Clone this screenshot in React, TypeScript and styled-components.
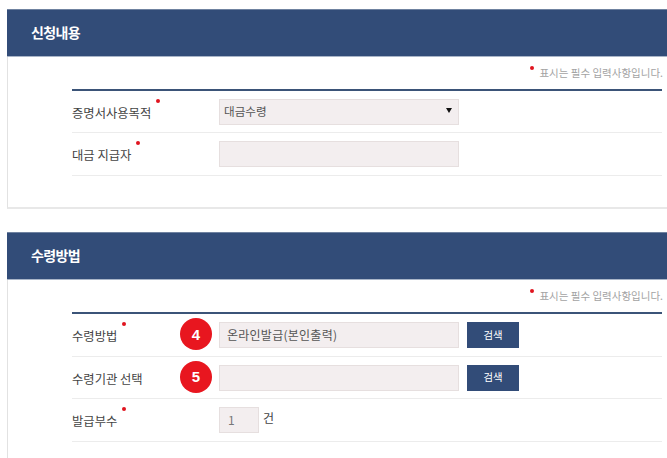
import styled, { createGlobalStyle } from "styled-components";

const GlobalStyle = createGlobalStyle`
  html, body {
    margin: 0;
    padding: 0;
    background: #fff;
    overflow: hidden;
  }
  body {
    font-family: "Noto Sans CJK KR", "Noto Sans", sans-serif;
  }
`;

const Page = styled.div`
  width: 667px;
  height: 458px;
  overflow: hidden;
  padding: 9px 0 0 7px;
  box-sizing: border-box;
  display: flex;
  flex-direction: column;
  gap: 23px;
`;

const Panel = styled.section<{ $height: number }>`
  width: 680px;
  height: ${(p) => p.$height}px;
  flex: none;
  box-sizing: border-box;
  border-left: 1px solid #e2e2e2;
  border-bottom: 2px solid #e8e8e8;
`;

const PanelHeader = styled.h2`
  margin: 0 0 0 -1px;
  height: 48px;
  box-sizing: border-box;
  padding: 0 0 3px 24px;
  display: flex;
  align-items: center;
  background: #324c78;
  border-top: 1px solid #6f82a0;
  border-bottom: 1px solid #a9b5c8;
  color: #fff;
  font-size: 14px;
  font-weight: 700;
  letter-spacing: -0.6px;
`;

const Body = styled.div`
  width: 590px;
  margin-left: 64px;
`;

const Note = styled.p`
  margin: 0 -1px 0 0;
  height: 32px;
  box-sizing: border-box;
  padding-top: 9px;
  display: flex;
  justify-content: flex-end;
  color: #a3a3a3;
  font-size: 10.5px;
  line-height: 14px;
  white-space: nowrap;
  gap: 5px;
`;

const Dot = styled.i`
  flex: none;
  width: 4px;
  height: 4px;
  border-radius: 50%;
  background: #e0141e;
`;

const Rows = styled.div`
  border-top: 2px solid #3b5478;
`;

const Row = styled.div<{ $height: number }>`
  height: ${(p) => p.$height}px;
  box-sizing: border-box;
  border-bottom: 1px solid #ececec;
  display: flex;
  align-items: center;
  position: relative;
`;

const Label = styled.div`
  width: 147px;
  flex: none;
  display: flex;
  align-items: flex-start;
  color: #444;
  font-size: 12.3px;
  line-height: 18px;
  padding-top: 2px;
  white-space: nowrap;
`;

const LabelDot = styled(Dot)`
  margin: -5px 0 0 5px;
`;

const Field = styled.div<{ $width: number }>`
  width: ${(p) => p.$width}px;
  height: 26px;
  flex: none;
  box-sizing: border-box;
  padding: 0 5px 1px 4px;
  display: flex;
  align-items: center;
  justify-content: space-between;
  background: #f3eeef;
  border: 1px solid #e6dfdf;
  color: #555;
  font-size: 11.6px;
`;

const WideField = styled(Field)`
  padding-left: 7px;
  font-size: 12px;
  letter-spacing: 0.25px;
`;

const Count = styled(Field)`
  justify-content: flex-start;
  padding-left: 8px;
  color: #777;
  font-size: 12px;
`;

const Caret = styled.span`
  width: 0;
  height: 0;
  margin: 0 1px 1px 0;
  border-left: 3px solid transparent;
  border-right: 3px solid transparent;
  border-top: 5px solid #111;
`;

const SearchButton = styled.button`
  width: 52px;
  height: 26px;
  flex: none;
  margin-left: 8px;
  padding: 0 0 2px;
  background: #324c78;
  border: 0;
  color: #fff;
  font-family: inherit;
  font-size: 10.4px;
`;

const Unit = styled.span`
  margin: -5px 0 0 4px;
  color: #444;
  font-size: 12px;
`;

const Step = styled.span`
  position: absolute;
  left: 108px;
  top: 50%;
  width: 32px;
  height: 32px;
  margin-top: -17px;
  border-radius: 50%;
  background: #e8161f;
  color: #fff;
  font-family: "Liberation Sans", sans-serif;
  font-size: 15px;
  font-weight: 700;
  display: flex;
  align-items: center;
  justify-content: center;
`;

function Requirement() {
  return (
    <Note>
      <Dot />
      표시는 필수 입력사항입니다.
    </Note>
  );
}

export default function App() {
  return (
    <>
      <GlobalStyle />
      <Page>
        <Panel $height={200}>
          <PanelHeader>신청내용</PanelHeader>
          <Body>
            <Requirement />
            <Rows>
              <Row $height={42}>
                <Label>
                  증명서사용목적
                  <LabelDot />
                </Label>
                <Field $width={240}>
                  대금수령
                  <Caret />
                </Field>
              </Row>
              <Row $height={43}>
                <Label>
                  대금 지급자
                  <LabelDot />
                </Label>
                <Field $width={240} />
              </Row>
            </Rows>
          </Body>
        </Panel>
        <Panel $height={240}>
          <PanelHeader>수령방법</PanelHeader>
          <Body>
            <Requirement />
            <Rows>
              <Row $height={43}>
                <Label>
                  수령방법
                  <LabelDot />
                </Label>
                <Step>4</Step>
                <WideField $width={240}>온라인발급(본인출력)</WideField>
                <SearchButton>검색</SearchButton>
              </Row>
              <Row $height={42}>
                <Label>수령기관 선택</Label>
                <Step>5</Step>
                <Field $width={240} />
                <SearchButton>검색</SearchButton>
              </Row>
              <Row $height={43}>
                <Label>
                  발급부수
                  <LabelDot />
                </Label>
                <Count $width={40}>1</Count>
                <Unit>건</Unit>
              </Row>
            </Rows>
          </Body>
        </Panel>
      </Page>
    </>
  );
}
